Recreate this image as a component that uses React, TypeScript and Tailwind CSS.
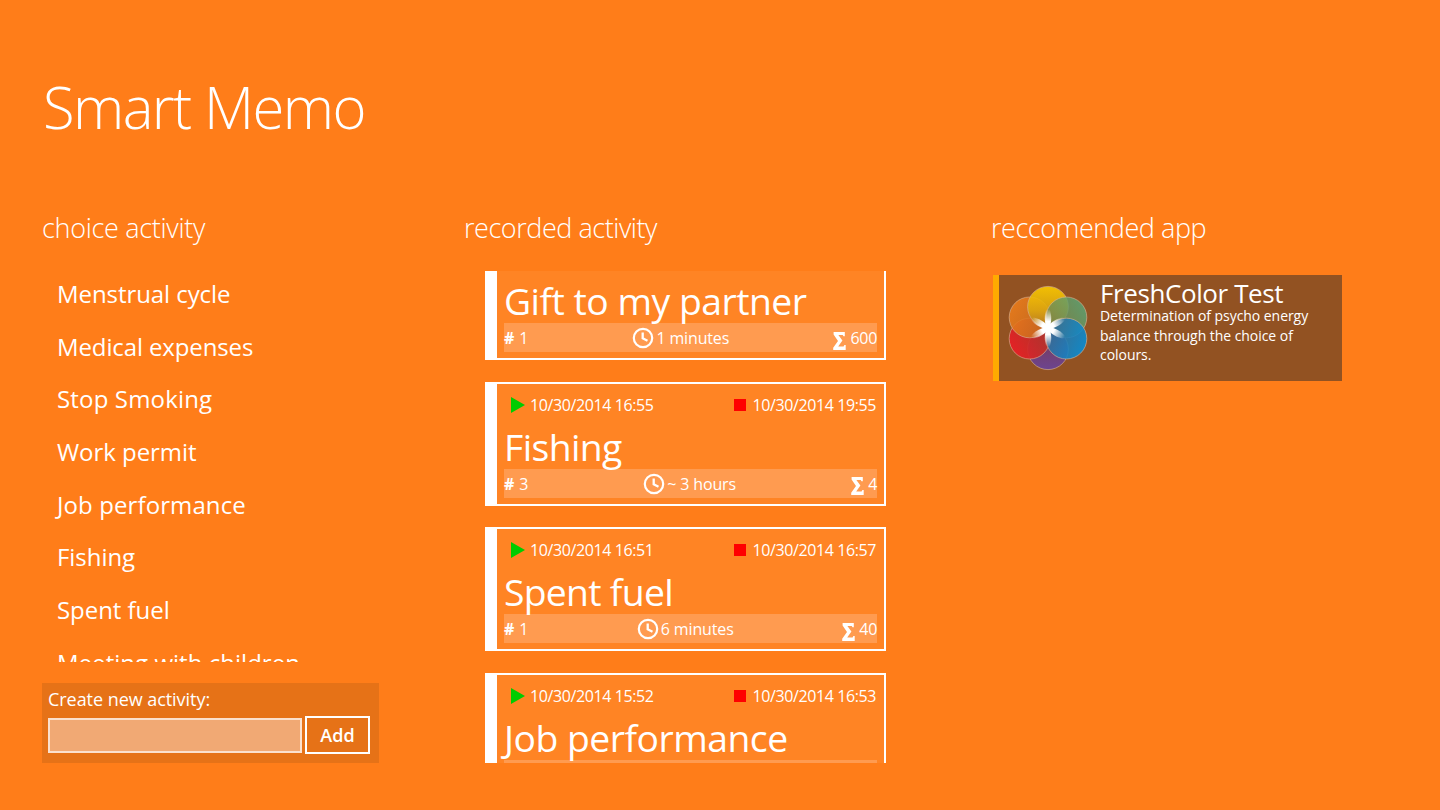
import React, { useState } from "react";

const activities = [
  { name: "Menstrual cycle", cls: "tracking-[-0.07px]" },
  { name: "Medical expenses", cls: "tracking-[-0.12px]" },
  { name: "Stop Smoking", cls: "tracking-[0.16px]" },
  { name: "Work permit", cls: "tracking-[-0.05px]" },
  { name: "Job performance", cls: "tracking-[0.1px]" },
  { name: "Fishing", cls: "tracking-[-0.05px]" },
  { name: "Spent fuel", cls: "tracking-[-0.05px]" },
  { name: "Meeting with children", cls: "tracking-[0.03px]" },
];

const records = [
  {
    name: "Gift to my partner",
    start: "10/30/2014 16:58",
    end: "10/30/2014 16:59",
    count: 1,
    time: "1 minutes",
    sum: 600,
    cls: "tracking-[-0.5px]",
  },
  {
    name: "Fishing",
    start: "10/30/2014 16:55",
    end: "10/30/2014 19:55",
    count: 3,
    time: "~ 3 hours",
    sum: 4,
    cls: "tracking-[-0.6px]",
  },
  {
    name: "Spent fuel",
    start: "10/30/2014 16:51",
    end: "10/30/2014 16:57",
    count: 1,
    time: "6 minutes",
    sum: 40,
    cls: "tracking-[-0.7px]",
  },
  {
    name: "Job performance",
    start: "10/30/2014 15:52",
    end: "10/30/2014 16:53",
    count: 2,
    time: "~ 1 hours",
    sum: 8,
    cls: "tracking-[-0.5px]",
  },
];

function Clock() {
  return (
    <svg viewBox="0 0 22 22" className="size-[22px]" fill="none" stroke="#fff">
      <circle cx="11" cy="11" r="9.2" strokeWidth="2.2" />
      <path d="M10.7 5.4v6l4.8 2.3" strokeWidth="2.3" />
    </svg>
  );
}

function Sigma() {
  return (
    <svg viewBox="0 0 13 18" className="mt-[5px] h-[18px] w-[13px]" fill="#fff">
      <path d="M.6 0h11.2v4.2h-1.3l-.8-1.3H5.4L9.4 8.6 5.2 14.6h5.4l.8-1.6h1.3V18H.2v-2.2L5 9 .6 2.4z" />
    </svg>
  );
}

function Flower() {
  return (
    <svg viewBox="-40 -43 80 86" className="h-[86px] w-20">
      <defs>
        <radialGradient id="shine" gradientUnits="userSpaceOnUse" cx="0" cy="0" r="19">
          <stop offset="0" stopColor="#fff" />
          <stop offset=".35" stopColor="#fff" />
          <stop offset="1" stopColor="#fff" stopOpacity="0" />
        </radialGradient>
        <linearGradient id="yellow" x1="0" y1="0" x2="0" y2="1">
          <stop offset="0" stopColor="#fccb00" />
          <stop offset=".6" stopColor="#dba60f" />
          <stop offset="1" stopColor="#b47a24" />
        </linearGradient>
        <linearGradient id="orange" x1="0" y1=".2" x2="1" y2=".8">
          <stop offset="0" stopColor="#f07f1b" />
          <stop offset="1" stopColor="#c5691f" />
        </linearGradient>
        <linearGradient id="red" x1="0" y1=".8" x2="1" y2=".2">
          <stop offset="0" stopColor="#ee1c25" />
          <stop offset="1" stopColor="#a8382a" />
        </linearGradient>
        <linearGradient id="green" x1="1" y1=".2" x2="0" y2=".8">
          <stop offset="0" stopColor="#54ab7c" />
          <stop offset="1" stopColor="#7f8040" />
        </linearGradient>
        <linearGradient id="blue" x1="1" y1=".7" x2="0" y2=".3">
          <stop offset="0" stopColor="#0090dd" />
          <stop offset="1" stopColor="#3a6a92" />
        </linearGradient>
        <linearGradient id="purple" x1="0" y1="1" x2="0" y2="0">
          <stop offset="0" stopColor="#6c4490" />
          <stop offset="1" stopColor="#7c3a4a" />
        </linearGradient>
      </defs>
      <g stroke="#d9b496" strokeOpacity=".6" strokeWidth="1">
        <circle cx="0" cy="21.2" r="20.4" fill="url(#purple)" />
        <circle cx="-18.4" cy="10.6" r="20.4" fill="url(#red)" fillOpacity=".93" />
        <circle cx="-18.4" cy="-10.6" r="20.4" fill="url(#orange)" fillOpacity=".88" />
        <circle cx="0" cy="-21.2" r="20.4" fill="url(#yellow)" fillOpacity=".9" />
        <circle cx="18.4" cy="-10.6" r="20.4" fill="url(#green)" fillOpacity=".82" />
        <circle cx="18.4" cy="10.6" r="20.4" fill="url(#blue)" fillOpacity=".88" />
      </g>
      <g fill="url(#shine)">
        {[0, 60, 120, 180, 240, 300].map((deg) => (
          <path
            key={deg}
            d="M-1.5 0C-3.6 -6 -4 -13 -1.5 -19L1.5 -19C4 -13 3.6 -6 1.5 0z"
            transform={`rotate(${deg})`}
          />
        ))}
        <circle r="5" />
      </g>
    </svg>
  );
}

function RecordCard({ item }: { item: (typeof records)[number] }) {
  return (
    <div className="mb-[21.5px] flex h-[124px] shrink-0 flex-col border-2 border-l-[12px] border-white bg-[#ff8424] pr-[7px] pl-[7px]">
      <div className="flex h-[42px] items-center justify-between pr-px pl-[7px] text-[16px] tracking-[-0.4px]">
        <span className="flex items-center gap-[5px]">
          <svg viewBox="0 0 14 16" className="h-4 w-[14px]">
            <path d="M0 0L14 8L0 16z" fill="#0c0" />
          </svg>
          {item.start}
        </span>
        <span className="flex items-center gap-[7px]">
          <i className="size-[12px] bg-[#f00]" />
          {item.end}
        </span>
      </div>
      <div className={`relative z-10 h-[43px] text-[37.3px] leading-[42px] whitespace-nowrap ${item.cls}`}>
        {item.name}
      </div>
      <div className="flex h-[29px] items-center justify-between bg-[#ff9b50] text-[16px] tracking-[-0.15px]">
        <span className="flex gap-[5px] pt-px">
          <b>#</b>
          {item.count}
        </span>
        <span className="flex items-center gap-[2px] pt-px">
          <Clock />
          {item.time}
        </span>
        <span className="flex items-center gap-[4px] pt-px tracking-[-0.3px]">
          <Sigma />
          {item.sum}
        </span>
      </div>
    </div>
  );
}

function App() {
  const [name, setName] = useState("");

  return (
    <main className="h-[810px] w-[1440px] overflow-hidden bg-[#ff7d19] pt-[65px] pl-[42px] font-['Open_Sans','Segoe_UI',sans-serif] text-white">
      <h1 className="h-[84px] pl-px text-[58px] leading-[84px] font-light tracking-[-1.6px]">Smart Memo</h1>
      <div className="mt-[59px] flex">
        <section className="w-[337px]">
          <h2 className="h-[40px] text-[27px] leading-[40px] font-light tracking-[-0.3px]">choice activity</h2>
          <ul className="mt-[20px] h-[394px] overflow-hidden pl-[15px] text-[24px]">
            {activities.map((v) => (
              <li className={`h-[52.7px] leading-[52.4px] ${v.cls}`} key={v.name}>
                {v.name}
              </li>
            ))}
          </ul>
          <div className="mt-[21px] h-[80px] bg-[#e67217] pl-[6px]">
            <label className="block h-[33px] text-[18px] leading-[33px] tracking-[-0.05px]">Create new activity:</label>
            <div className="flex items-center gap-[3px]">
              <input
                className="h-[35px] w-[254px] border-2 border-[#fbe0cd] bg-[#f1a974] px-2 outline-none"
                value={name}
                onChange={(e) => setName(e.target.value)}
              />
              <button className="h-[38px] w-[65px] border-2 border-white text-[18px] font-semibold">Add</button>
            </div>
          </div>
        </section>
        <section className="ml-[85px] w-[422px]">
          <h2 className="h-[40px] text-[27px] leading-[40px] font-light tracking-[-0.45px]">recorded activity</h2>
          <div className="mt-[23px] ml-[21px] flex h-[492px] flex-col overflow-hidden">
            <div className="-mt-[34.9px]">
              {records.map((v) => (
                <RecordCard item={v} key={v.name} />
              ))}
            </div>
          </div>
        </section>
        <section className="ml-[105px]">
          <h2 className="h-[40px] text-[27px] leading-[40px] font-light tracking-[-0.45px]">reccomended app</h2>
          <div className="mt-[27px] ml-[2px] flex h-[105.5px] w-[349px] border-l-[6px] border-[#ffaa00] bg-[#925222] pl-[9px]">
            <div className="pt-[10px]">
              <Flower />
            </div>
            <div className="ml-[12px]">
              <h3 className="h-[31px] text-[26px] leading-[37px] tracking-[-0.4px]">FreshColor Test</h3>
              <p className="w-[225px] text-[14px] leading-[19.5px] tracking-[-0.05px]">
                Determination of psycho energy balance through the choice of colours.
              </p>
            </div>
          </div>
        </section>
      </div>
    </main>
  );
}

export default App;
